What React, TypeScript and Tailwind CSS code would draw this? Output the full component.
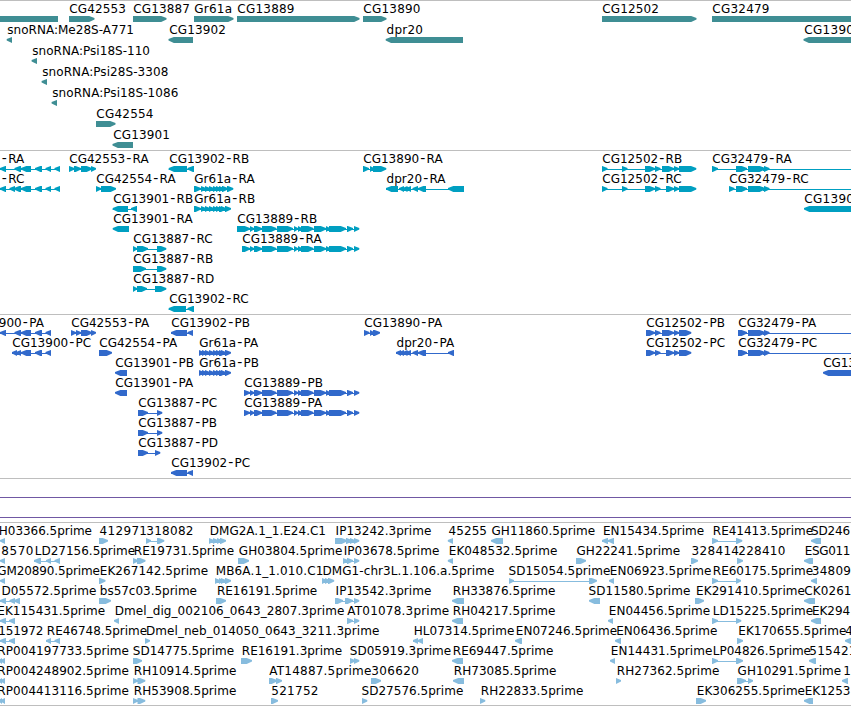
type Span = [number, number];

// label, label start, label end, strand, exon spans
type Feature = [string, number, number, 1 | -1, Span[]];

const L = -1;
const R = 1;
// runs past the right edge of the window
const OUT: Span = [900, 910];

const genes: Feature[][] = [
  [
    ["", 0, 0, L, [[-20, 58]]],
    ["CG42553", 69.5, 125, R, [[69, 94.5]]],
    ["CG13887", 133.5, 189, R, [[133, 166.5]]],
    ["Gr61a", 194.5, 231, R, [[194, 233.5]]],
    ["CG13889", 237.5, 293.5, R, [[237, 359.5]]],
    ["CG13890", 363.5, 419.5, R, [[363, 386.5]]],
    ["CG12502", 602.5, 658, R, [[602, 696.5]]],
    ["CG32479", 712.5, 768.5, R, [[712, 900]]],
  ],
  [
    ["snoRNA:Me28S-A771", 7.5, 133, L, [[6.7, 12]]],
    ["CG13902", 169.5, 225, L, [[168.5, 193]]],
    ["dpr20", 386.7, 422, L, [[385.7, 463]]],
    ["CG1390", 804.5, 853, L, [[803.5, 900]]],
  ],
  [["snoRNA:Psi18S-110", 32.5, 149, L, [[31.6, 37]]]],
  [["snoRNA:Psi28S-3308", 42.5, 167.3, L, [[41.6, 47]]]],
  [["snoRNA:Psi18S-1086", 52.5, 177.3, L, [[51.6, 57]]]],
  [["CG42554", 96.5, 152.5, R, [[96, 115.5]]]],
  [["CG13901", 113.5, 169, L, [[112.5, 133]]]],
];

const cg13889: Span[] = [
  [250, 254], [254, 262], [262, 276.5], [277, 293], [294, 298], [298, 302], [301, 313.5],
  [314, 326], [326, 330], [329, 346], [347, 353], [354, 359.3],
];
const gr61a: Span[] = [[205, 210], [209, 214], [213, 218], [216, 221], [219, 224]];
const cg32479: Span[] = [[748, 765], [764, 769.5], OUT];
const dpr20: Span[] = [[399, 404], [402.5, 407.5], [406, 411], [412.5, 418], [418, 426]];

const transcripts: Feature[][] = [
  [
    ["-RA", 2, 24.5, L, [[-20, -10], [0, 6], [14.5, 21], [21, 31], [35, 42], [45.5, 51], [54.5, 60]]],
    ["CG42553-RA", 69.5, 149.3, R, [[69, 74.5], [74, 81], [81, 92], [91, 96]]],
    ["CG13902-RB", 169.5, 247, L, [[168.7, 187], [187.5, 194]]],
    ["CG13890-RA", 363.5, 443.5, R, [[363, 369], [370, 374], [373, 386.3]]],
    ["CG12502-RB", 602.5, 680, R, [[602, 607.5], [622, 627.5], [645, 655], [655, 660.5], [662, 674], [674, 679], [679, 696.3]]],
    ["CG32479-RA", 712.5, 792.7, R, [[712, 718], [736, 747], ...cg32479]],
  ],
  [
    ["-RC", 2, 23.5, L, [[-20, -10], [0, 6], [9.5, 15], [14, 21], [21, 31], [35, 42], [45.5, 51], [54.5, 60]]],
    ["CG42554-RA", 96.5, 176.5, R, [[96, 101], [101, 116]]],
    ["Gr61a-RA", 194.5, 254.5, R, [[194, 201], [201, 206], ...gr61a, [222, 228], [227, 233.3]]],
    ["dpr20-RA", 386.8, 446.5, L, [[386, 398], ...dpr20, [448, 464]]],
    ["CG12502-RC", 602.5, 681, R, [[602, 607.5], [622, 627.5], [645, 655], [655, 660.5], [666, 674], [674, 679], [679, 696.3]]],
    ["CG32479-RC", 729.5, 808, R, [[729, 734.5], [736, 747], ...cg32479]],
  ],
  [
    ["CG13901-RB", 113.5, 191.3, L, [[112.7, 128], [131, 137]]],
    ["Gr61a-RB", 194.5, 252, R, [[194, 201], [201, 206], ...gr61a, [221, 226], [225, 231]]],
    ["CG1390", 804.5, 853, L, [[804, 900]]],
  ],
  [
    ["CG13901-RA", 113.5, 193.3, L, [[112.7, 129]]],
    ["CG13889-RB", 237.5, 315.3, R, [[237, 250], ...cg13889]],
  ],
  [
    ["CG13887-RC", 133.5, 212, R, [[133, 137], [137, 148], [157, 166.3]]],
    ["CG13889-RA", 242.5, 322.5, R, [[242, 250], ...cg13889]],
  ],
  [["CG13887-RB", 133.5, 211.3, R, [[133, 146], [157, 166.3]]]],
  [["CG13887-RD", 133.5, 213, R, [[133, 137], [137, 147], [155, 166.3]]]],
  [["CG13902-RC", 169.5, 248, L, [[168.7, 186], [187.5, 194]]]],
];

const proteins: Feature[][] = [
  [
    ["900-PA", -1, 43.5, L, [[-20, -10], [0, 6], [14.5, 21], [21, 31], [35, 42], [45.5, 51]]],
    ["CG42553-PA", 71.5, 150.7, R, [[71, 76], [76, 81], [81, 92], [91, 96]]],
    ["CG13902-PB", 171.5, 248.3, L, [[171, 187], [187.5, 193]]],
    ["CG13890-PA", 364.5, 443.3, R, [[364, 369.5], [370, 374], [373, 380]]],
    ["CG12502-PB", 646.5, 723.3, R, [[646, 655], [655, 660.5], [662, 674], [674, 679], [679, 691.3]]],
    ["CG32479-PA", 738.5, 817.7, R, [[738, 747], ...cg32479]],
  ],
  [
    ["CG13900-PC", 12.5, 90.3, L, [[12, 17], [16, 21], [21, 31], [35, 42], [45.5, 51]]],
    ["CG42554-PA", 99.5, 178.7, R, [[99, 112]]],
    ["Gr61a-PA", 199.5, 258.7, R, [[199, 204], [202, 207], ...gr61a, [221, 226], [225, 231]]],
    ["dpr20-PA", 396.8, 455.7, L, [[396, 401], ...dpr20, [448, 454]]],
    ["CG12502-PC", 646.5, 724.3, R, [[646, 655], [655, 660.5], [666, 674], [674, 679], [679, 691.3]]],
    ["CG32479-PC", 738.5, 816.3, R, [[738, 747], ...cg32479]],
  ],
  [
    ["CG13901-PB", 115.5, 192.5, L, [[115, 127]]],
    ["Gr61a-PB", 199.5, 256.5, R, [[199, 204], [202, 207], ...gr61a, [221, 226], [225, 231]]],
    ["CG13", 823.5, 855, L, [[823, 900]]],
  ],
  [
    ["CG13901-PA", 115.5, 194.7, L, [[115, 127]]],
    ["CG13889-PB", 244.5, 321.5, R, [[244, 250], ...cg13889]],
  ],
  [
    ["CG13887-PC", 138.5, 216.3, R, [[138, 148], [157, 162.3]]],
    ["CG13889-PA", 244.5, 323.7, R, [[244, 250], ...cg13889]],
  ],
  [["CG13887-PB", 138.5, 215.3, R, [[138, 148], [157, 162.3]]]],
  [["CG13887-PD", 138.5, 217.3, R, [[138, 148], [155, 160.3]]]],
  [["CG13902-PC", 171.5, 249.3, L, [[171, 187], [187.5, 193]]]],
];

const ests: Feature[][] = [
  [
    ["H03366.5prime", -1, 91, L, [[0, 5]]],
    ["412971", 99.8, 146, R, [[99, 108]]],
    ["318082", 146.5, 192.5, R, [[146, 151], [157, 164.3]]],
    ["DMG2A.1_1.E24.C1", 210, 325, R, [[209, 214], [213, 218], [217, 222], [220, 226]]],
    ["IP13242.3prime", 335.8, 430.3, R, [[335, 347], [346, 352], [350, 355], [354, 359.3]]],
    ["45255", 448.8, 486, L, [[447.8, 453]]],
    ["GH11860.5prime", 491.7, 594.2, L, [[491, 503]]],
    ["EN15434.5prime", 603.2, 703.2, L, [[602, 608], [608, 614]]],
    ["RE41413.5prime", 713, 812.2, R, [[712, 718], [736, 742.3]]],
    ["SD246", 811.2, 849.2, L, [[811, 821]]],
  ],
  [
    ["8570", 1.5, 32.5, L, [[0, 5]]],
    ["LD27156.5prime", 35, 134.2, L, [[34, 41], [46, 51], [54.5, 60]]],
    ["RE19731.5prime", 134, 233.2, R, [[133, 138], [137, 145.5]]],
    ["GH03804.5prime", 239, 341.3, R, [[238, 249]]],
    ["IP03678.5prime", 344, 438.3, R, [[343, 348], [347, 353], [354, 359.3]]],
    ["EK048532.5prime", 449, 556.3, L, [[447.8, 453]]],
    ["GH22241.5prime", 576.7, 679.2, R, [[576, 586]]],
    ["328414", 691.8, 738, R, [[691, 698]]],
    ["228410", 738.5, 784.3, R, [[737, 743]]],
    ["ESG011", 805, 849.3, L, [[804, 813]]],
  ],
  [
    ["GM20890.5prime", -2.5, 99, L, [[0, 5]]],
    ["EK267142.5prime", 100, 207.2, R, [[99, 105.5]]],
    ["MB6A.1_1.010.C1", 216, 322.3, R, [[215, 220], [219, 223], [221, 226], [225, 231]]],
    ["DMG1-chr3L.1.106.a.5prime", 322.7, 493.3, R, [[322, 327], [325, 330], [328, 334.2]]],
    ["SD15054.5prime", 508.7, 609.3, R, [[509, 514], [589, 597]]],
    ["EN06923.5prime", 610, 710.3, L, [[609, 614]]],
    ["RE60175.5prime", 713, 812.2, R, [[712, 718], [736, 741]]],
    ["34809", 812, 850, L, [[811, 817]]],
  ],
  [
    ["D05572.5prime", 1.7, 95.3, L, [[0, 6], [9.5, 15], [14, 20]]],
    ["bs57c03.5prime", 100, 196, R, [[99, 111]]],
    ["RE16191.5prime", 217.2, 316.2, R, [[216, 226]]],
    ["IP13542.3prime", 335.8, 430.3, R, [[335, 343], [345, 353], [354, 359.3]]],
    ["RH33876.5prime", 453, 554.3, L, [[452, 464]]],
    ["SD11580.5prime", 588.8, 689.3, L, [[589, 600]]],
    ["EK291410.5prime", 696.2, 804, R, [[695, 704]]],
    ["CK0261", 804.5, 850.5, L, [[804, 815]]],
  ],
  [
    ["EK115431.5prime", -2.5, 104.2, L, [[0, 6], [9, 15]]],
    ["Dmel_dig_002106_0643_2807.3prime", 115, 343.3, L, [[114, 119]]],
    ["AT01078.3prime", 347.5, 448.2, R, [[347, 353], [354, 359.3]]],
    ["RH04217.5prime", 453, 554.3, L, [[452, 463]]],
    ["EN04456.5prime", 609, 709.2, L, [[608, 613]]],
    ["LD15225.5prime", 713, 812.2, R, [[712, 718], [736, 741.3]]],
    ["EK294", 812.2, 849.2, L, [[811, 821]]],
  ],
  [
    ["151972", -1.5, 42.5, L, [[0, 6], [9, 15]]],
    ["RE46748.5prime", 47, 146.2, L, [[46, 51], [54.5, 60]]],
    ["Dmel_neb_014050_0643_3211.3prime", 146.2, 378.3, R, [[145, 150]]],
    ["HL07314.5prime", 414, 513.3, L, [[413, 418], [417.5, 423]]],
    ["EN07246.5prime", 516, 616.2, L, [[515, 522]]],
    ["EN06436.5prime", 616.5, 716.3, L, [[615, 621]]],
    ["EK170655.5prime", 738.5, 845.3, R, [[737, 743]]],
    ["4", 845.5, 851, L, [[845, 852]]],
  ],
  [
    ["RP004197733.5prime", -2.5, 128, L, [[-10, -4], [-1, 2], [0.5, 5]]],
    ["SD14775.5prime", 133, 233.2, R, [[133, 142]]],
    ["RE16191.3prime", 242, 341.2, R, [[241, 252]]],
    ["SD05919.3prime", 350, 450.2, R, [[350, 355], [354, 359.3]]],
    ["RE69447.5prime", 453, 552.3, L, [[452, 463]]],
    ["EN14431.5prime", 611, 711.3, L, [[610, 615]]],
    ["LP04826.5prime", 713, 810, R, [[712, 718], [736, 743]]],
    ["515421", 809.5, 855.5, L, [[809, 816]]],
  ],
  [
    ["RP004248902.5prime", -2.5, 128, L, [[-10, -4], [-1, 2], [0.5, 5]]],
    ["RH10914.5prime", 134, 235.3, R, [[133, 138], [137.5, 145.3]]],
    ["AT14887.5prime", 269.5, 370.3, R, [[269, 277], [276, 282]]],
    ["306620", 371.5, 418, R, [[371, 381]]],
    ["RH73085.5prime", 454, 555.3, L, [[453, 464]]],
    ["RH27362.5prime", 617, 718.3, R, [[616, 621]]],
    ["GH10291.5prime", 737.8, 840.2, R, [[737, 746], [748, 753]]],
    ["1", 843.5, 849, L, [[842, 848]]],
  ],
  [
    ["RP004413116.5prime", -2.5, 128, L, [[-10, -4], [-1, 2], [0.5, 5]]],
    ["RH53908.5prime", 134, 235.3, R, [[133, 138], [137.5, 145.3]]],
    ["521752", 271.5, 317.5, R, [[271, 278]]],
    ["SD27576.5prime", 361.7, 462.3, R, [[362, 367.3]]],
    ["RH22833.5prime", 481, 582.3, R, [[480, 485.3]]],
    ["EK306255.5prime", 697, 804, R, [[696, 706]]],
    ["EK1253", 805, 849.3, L, [[804, 813]]],
  ],
];

const TOP = 15;
const HEAD = 5.3;

function arrow([start, end]: Span, strand: number) {
  const head = Math.min(HEAD, end - start);
  const [tail, tip] = strand > 0 ? [start, end] : [end, start];
  const neck = tip - head * strand;
  return `M${tail} ${TOP}H${neck}L${tip} ${TOP + 2}V${TOP + 3.6}L${neck} ${TOP + 6}H${tail}Z`;
}

const labelClass = "fill-black font-['DejaVu_Sans',sans-serif] text-[12px]";

function Label({ text, x, end }: { text: string; x: number; end: number }) {
  const isoform = text.match(/^(.*)-([RP][A-D])$/);
  if (isoform) {
    // isoform suffix sits a little apart from the gene name
    return (
      <text x={x - 0.2} y="12" className={labelClass}>
        {isoform[1]}
        <tspan dx={isoform[1] ? 1.1 : 0} className="text-[14px]">-</tspan>
        <tspan dx="1.3">{isoform[2]}</tspan>
      </text>
    );
  }
  return (
    <text x={x - 0.2} y="12" textLength={end - x + 1.2} className={labelClass}>
      {text}
    </text>
  );
}

function FeatureGlyph({ feature }: { feature: Feature }) {
  const [label, x, end, strand, spans] = feature;
  const first = spans[0][0];
  const last = spans[spans.length - 1][1];
  return (
    <g>
      {spans.length > 1 && <rect x={first} y={TOP + 3} width={last - first - 1} height="1" />}
      <path d={spans.map((s) => arrow(s, strand)).join("")} />
      {label && <Label text={label} x={x} end={end} />}
    </g>
  );
}

function Track({ rows, className, rowClass }: { rows: Feature[][]; className: string; rowClass: string }) {
  return (
    <section className={`w-full shrink-0 border-t border-[#bebebe] ${className}`}>
      {rows.map((row, i) => (
        <div key={i} className={rowClass}>
          <svg className="block h-[22px] w-full overflow-visible fill-current">
            {row.map((feature, j) => (
              <FeatureGlyph key={j} feature={feature} />
            ))}
          </svg>
        </div>
      ))}
    </section>
  );
}

export default function App() {
  return (
    <main className="flex h-[706px] w-[851px] flex-col overflow-hidden bg-white">
      <Track rows={genes} className="h-[150px] text-[#3f8e94]" rowClass="h-[21px]" />
      <Track rows={transcripts} className="h-[164px] text-[#009fc1]" rowClass="h-5" />
      <Track rows={proteins} className="h-[164px] text-[#3169cb]" rowClass="h-5" />
      <div className="h-11 shrink-0 border-t border-[#bebebe] pt-[18px]">
        <div className="h-[21px] border-y border-[#7058a3]" />
      </div>
      <Track rows={ests} className="h-[184px] border-b text-[#87bcde]" rowClass="h-5" />
    </main>
  );
}
